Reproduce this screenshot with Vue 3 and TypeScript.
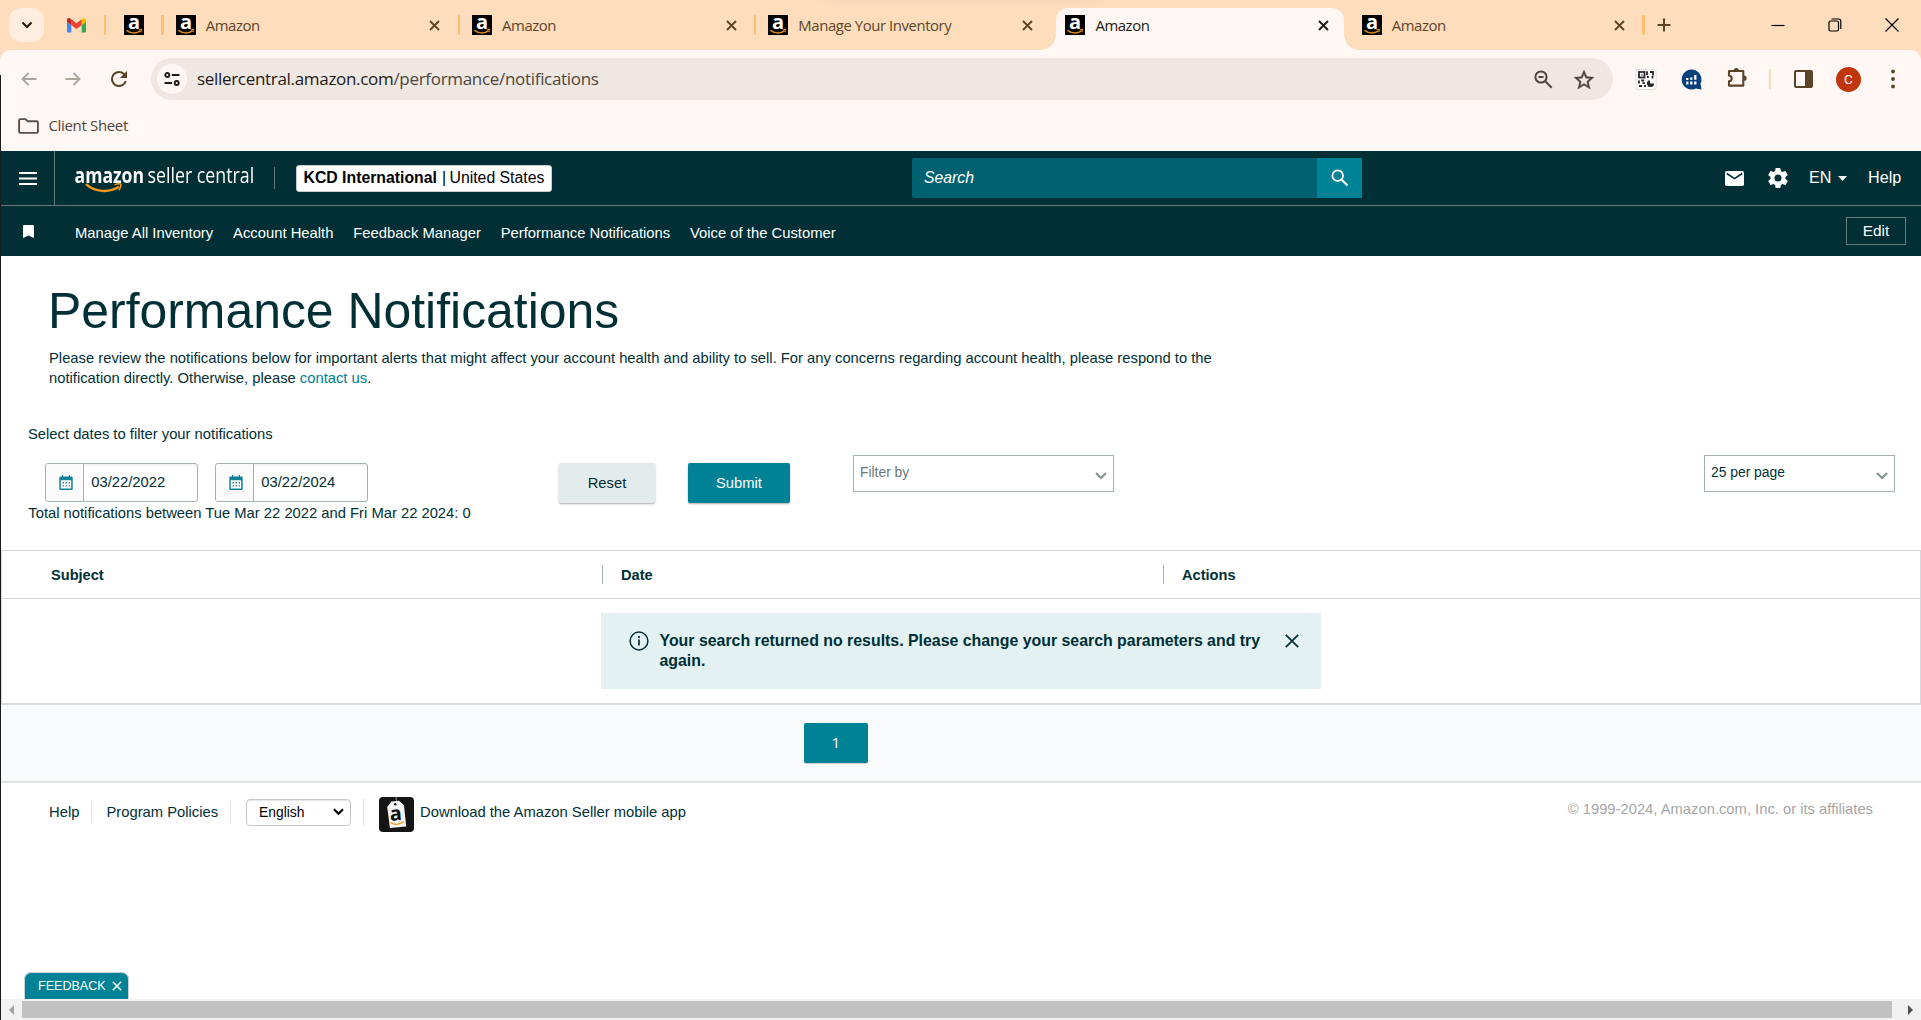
<script setup lang="ts">
interface Tab {
  title: string
  active?: boolean
}

const tabs: Tab[] = [
  { title: 'Amazon' },
  { title: 'Amazon' },
  { title: 'Manage Your Inventory' },
  { title: 'Amazon', active: true },
  { title: 'Amazon' },
]

const favorites: string[] = [
  'Manage All Inventory',
  'Account Health',
  'Feedback Manager',
  'Performance Notifications',
  'Voice of the Customer',
]

const dates: string[] = ['03/22/2022', '03/22/2024']
</script>

<template>
  <div class="window">
    <header class="chrome">
      <div class="tabstrip">
        <div class="tab-search">
          <svg width="12" height="8" viewBox="0 0 12 8"><path d="M1.5 1.5 6 6l4.500-4.500" fill="none" stroke="#231a10" stroke-width="2.200" /></svg>
        </div>
        <svg class="gmail" width="19" height="14.500" viewBox="52 42 88 66" preserveAspectRatio="none">
          <path fill="#4285f4" d="M58 108h14V74L52 59v43c0 3.320 2.690 6 6 6" />
          <path fill="#34a853" d="M120 108h14c3.320 0 6-2.690 6-6V59l-20 15" />
          <path fill="#fbbc04" d="M120 48v26l20-15v-8c0-7.420-8.470-11.650-14.400-7.200" />
          <path fill="#ea4335" d="M72 74V48l24 18 24-18v26L96 92" />
          <path fill="#c5221f" d="M52 51v8l20 15V48l-5.600-4.200c-5.940-4.450-14.400-.22-14.400 7.200" />
        </svg>
        <i class="sep pinned-sep"></i>
        <svg class="favicon pinned" viewBox="0 0 20 20">
          <rect width="20" height="20" fill="#000" />
          <text x="10" y="13.800" text-anchor="middle" class="fav-letter">a</text>
          <path d="M2.500 15.300c4.500 3.300 10 3.300 14 .6" fill="none" stroke="#d98a1c" stroke-width="1.500" />
          <path d="M14.600 14.800l3-.3-.8 2.800" fill="none" stroke="#d98a1c" stroke-width="1.100" />
        </svg>
        <div v-for="(tab, i) in tabs" :key="i" class="tab" :class="{ active: tab.active }">
          <i v-if="!tab.active && i !== 4" class="sep"></i>
          <svg class="favicon" viewBox="0 0 20 20">
            <rect width="20" height="20" fill="#000" />
            <text x="10" y="13.800" text-anchor="middle" class="fav-letter">a</text>
            <path d="M2.500 15.300c4.500 3.300 10 3.300 14 .6" fill="none" stroke="#d98a1c" stroke-width="1.500" />
            <path d="M14.600 14.800l3-.3-.8 2.800" fill="none" stroke="#d98a1c" stroke-width="1.100" />
          </svg>
          <span class="tab-title">{{ tab.title }}</span>
          <svg class="tab-close" width="11" height="11" viewBox="0 0 11 11"><path d="M1 1l9 9M10 1l-9 9" fill="none" stroke="currentColor" stroke-width="1.900" /></svg>
        </div>
        <i class="sep last-sep"></i>
        <svg class="new-tab" width="14" height="14" viewBox="0 0 14 14"><path d="M7 .5v13M.5 7h13" stroke="#59442a" stroke-width="2" /></svg>
        <div class="win-controls">
          <svg width="14" height="14" viewBox="0 0 14 14"><path d="M.5 7.500h13" stroke="#000" stroke-width="1.200" /></svg>
          <svg width="14" height="14" viewBox="0 0 14 14"><g fill="none" stroke="#000" stroke-width="1.200"><rect x="1" y="3" width="9.500" height="10" rx="1.500" /><path d="M3.500 1h7a2.300 2.300 0 0 1 2.300 2.300V11" /></g></svg>
          <svg width="14" height="14" viewBox="0 0 14 14"><path d="M.5.5l13 13M13.500.5l-13 13" stroke="#000" stroke-width="1.200" /></svg>
        </div>
      </div>

      <div class="toolbar">
        <svg class="nav-arrow back" width="16" height="14" viewBox="0 0 16 14"><path d="M15.500 7H1.500M7.500.9 1.500 7l6 6.100" fill="none" stroke="#aea39b" stroke-width="1.900" /></svg>
        <svg class="nav-arrow forward" width="16" height="14" viewBox="0 0 16 14"><path d="M.5 7h14M8.500.9l6 6.100-6 6.100" fill="none" stroke="#aea39b" stroke-width="1.900" /></svg>
        <svg class="reload" width="16" height="16" viewBox="4 4 16 16"><path fill="#5a4327" d="M17.650 6.350A7.960 7.960 0 0 0 12 4a8 8 0 1 0 7.730 10h-2.080A6 6 0 1 1 12 6c1.660 0 3.140.69 4.220 1.780L13 11h7V4z" /></svg>
        <div class="omnibox">
          <div class="site-info">
            <svg width="16" height="14" viewBox="0 0 16 14"><g fill="none" stroke="#231a14" stroke-width="1.900"><circle cx="3.300" cy="3" r="2" /><path d="M7.800 3H15.500M.5 11H8" /><circle cx="12.700" cy="11" r="2" /></g></svg>
          </div>
          <span class="url"><span class="host">sellercentral.amazon.com</span>/performance/notifications</span>
          <svg class="zoom-out" width="19" height="19" viewBox="0 0 19 19"><g fill="none" stroke="#50453d" stroke-width="2"><circle cx="7" cy="7" r="5.600" /><path d="M11 11l6.700 6.700M4.500 7h5" /></g></svg>
          <svg class="star" width="20" height="19" viewBox="2 2 20 19"><path fill="#50453d" stroke="#50453d" stroke-width=".4" d="M22 9.240l-7.190-.62L12 2 9.190 8.630 2 9.240l5.460 4.730L5.820 21 12 17.270 18.180 21l-1.630-7.030L22 9.240zM12 15.400l-3.760 2.270 1-4.280-3.320-2.880 4.380-.38L12 6.100l1.710 4.040 4.380.38-3.320 2.880 1 4.280L12 15.400z" /></svg>
        </div>
        <svg class="ext-qr" width="22" height="22" viewBox="0 0 22 22">
          <rect x="1" y="1.500" width="20" height="20" rx="2" fill="#fff" stroke="#e4dedb" />
          <g fill="none" stroke="#26282a" stroke-width="1.800"><rect x="4" y="4" width="5.500" height="5.500" /><path d="M12 3.200v4M12 9h1.800M15 4h3v3.500M17.500 8v2.500M4 12.500v3M6.200 12.500h3M4 18h3M7.500 15.200h2.500M9 18h2" /></g>
          <path fill="#26282a" d="M6.200 6.200h1.400v1.400H6.200zM14.500 12a3.600 3.600 0 1 0 4.700 3.500h-3.800z" />
        </svg>
        <svg class="ext-chat" width="21" height="21" viewBox="0 0 21 21">
          <path fill="#063f7b" d="M10.500.5a10 10 0 1 0 4.300 19.100l5.700.9-1-5.700A10 10 0 0 0 10.500.5z" />
          <path d="M6.300 9v2M10.300 8.500v2.300M14.300 6v4.800M6.300 12.500v3M10.300 12.500v3M14.300 12.500v3" stroke="#fff" stroke-width="2.300" />
        </svg>
        <svg class="puzzle" width="22" height="21" viewBox="0 0 22 21">
          <path d="M2 4h14.300v14.600H2v-4.300c3.600-.6 3.600-5.200 0-5.800z" fill="none" stroke="#5a4327" stroke-width="2.100" stroke-linejoin="round" />
          <path fill="#5a4327" d="M6.700 3.500a2.600 2.600 0 0 1 5.200 0zM17 8.600a2.600 2.600 0 0 1 0 5.200z" />
        </svg>
        <i class="tool-sep"></i>
        <svg class="side-panel" width="19" height="18" viewBox="0 0 19 18"><rect x="1" y="1" width="17" height="16" rx="1" fill="none" stroke="#5a4327" stroke-width="2" /><path fill="#5a4327" d="M11 1h7v16h-7z" /></svg>
        <div class="avatar">C</div>
        <svg class="dots" width="4" height="20" viewBox="0 0 4 20"><g fill="#5a4327"><circle cx="2" cy="2.500" r="1.900" /><circle cx="2" cy="10" r="1.900" /><circle cx="2" cy="17.500" r="1.900" /></g></svg>
      </div>

      <div class="bookmarks">
        <svg width="21" height="16" viewBox="0 0 21 16"><path d="M1.100 2.200q0-1.100 1.100-1.100h5.300l2.200 2.200h9.100q1.100 0 1.100 1.100v9.400q0 1.100-1.100 1.100H2.200q-1.100 0-1.100-1.100z" fill="none" stroke="#5b5048" stroke-width="1.900" /></svg>
        <span>Client Sheet</span>
      </div>
    </header>

    <div class="sc-header">
      <div class="burger"><svg width="18" height="13" viewBox="0 0 18 13"><path d="M0 1h18M0 6.500h18M0 12h18" stroke="#fff" stroke-width="1.800" /></svg></div>
      <div class="logo">
        <b>amazon</b><span>seller central</span>
        <svg width="38" height="10" viewBox="0 0 38 10"><path d="M1 1.200c9 8.200 23 8.800 33 2.600" fill="none" stroke="#f7981d" stroke-width="2.400" /><path d="M29.500 1.600c3-1 5-1.200 6.300-.6.400 1.800-.5 4.200-2 6.200" fill="none" stroke="#f7981d" stroke-width="1.500" /></svg>
      </div>
      <i class="head-sep"></i>
      <div class="account"><b>KCD International</b><em>|</em><span>United States</span></div>
      <div class="search">
        <span>Search</span>
        <div class="search-btn"><svg width="18" height="18" viewBox="0 0 18 18"><g fill="none" stroke="#fff" stroke-width="1.800"><circle cx="6.700" cy="6.700" r="5.300" /><path d="M10.700 10.700l5.800 5.800" stroke-width="2.100" /></g></svg></div>
      </div>
      <svg class="mail" width="19" height="15" viewBox="0 0 19 15"><rect width="19" height="15" rx="1.800" fill="#fff" /><path d="M1.800 2.500l7.700 5.100 7.700-5.100" fill="none" stroke="#002f36" stroke-width="1.700" /></svg>
      <svg class="gear" width="20" height="20" viewBox="2 2 20 20"><path fill="#fff" d="M19.430 12.980c.04-.32.070-.64.070-.98s-.03-.66-.07-.98l2.110-1.650c.19-.15.240-.42.120-.64l-2-3.460c-.12-.22-.39-.3-.61-.22l-2.490 1c-.52-.4-1.080-.73-1.690-.98l-.38-2.650A.488.488 0 0 0 14 2h-4c-.25 0-.46.180-.49.420l-.38 2.650c-.61.250-1.170.590-1.690.980l-2.490-1c-.23-.09-.49 0-.61.220l-2 3.460c-.13.220-.07.490.12.640l2.110 1.650c-.04.320-.07.650-.07.980s.03.660.070.980l-2.110 1.650c-.19.150-.24.420-.12.640l2 3.460c.12.220.39.300.61.220l2.490-1c.52.400 1.080.730 1.690.980l.38 2.650c.03.240.24.420.49.420h4c.25 0 .46-.18.490-.42l.38-2.650c.61-.25 1.170-.59 1.690-.98l2.490 1c.23.090.49 0 .61-.22l2-3.460c.12-.22.070-.49-.12-.64l-2.110-1.650zM12 15.500a3.500 3.500 0 1 1 0-7 3.500 3.500 0 0 1 0 7z" /></svg>
      <div class="lang"><span>EN</span><svg width="9" height="5" viewBox="0 0 9 5"><path d="M0 0h9L4.500 5z" fill="#fff" /></svg></div>
      <span class="help">Help</span>
    </div>

    <nav class="fav-bar">
      <svg class="bookmark" width="11" height="13" viewBox="0 0 11 13"><path d="M0 1q0-1 1-1h9q1 0 1 1v12L5.500 10.600 0 13z" fill="#fff" /></svg>
      <div class="fav-links"><a v-for="f in favorites" :key="f">{{ f }}</a></div>
      <div class="edit">Edit</div>
    </nav>

    <main class="content">
      <h1>Performance Notifications</h1>
      <p class="intro">Please review the notifications below for important alerts that might affect your account health and ability to sell. For any concerns regarding account health, please respond to the<br />notification directly. Otherwise, please <a>contact us</a>.</p>
      <p class="hint">Select dates to filter your notifications</p>
      <div class="filters">
        <div v-for="d in dates" :key="d" class="date">
          <div class="cal">
            <svg width="14" height="15" viewBox="0 0 14 15"><path fill="#12809a" d="M3 0v1.500H1.500A1.200 1.200 0 0 0 .3 2.700v11.100A1.200 1.200 0 0 0 1.500 15h11a1.200 1.200 0 0 0 1.200-1.200V2.700a1.200 1.200 0 0 0-1.200-1.200H11V0H9.800v1.500H4.200V0z" /><path fill="#fff" d="M1.800 5.300h10.400v8.200H1.800z" /><path d="M3.500 7.700h7.500M3.500 10.900h7.500" stroke="#3a82a3" stroke-width="1.400" stroke-dasharray="1.500 1.500" /></svg>
          </div>
          <span>{{ d }}</span>
        </div>
        <div class="btn reset">Reset</div>
        <div class="btn submit">Submit</div>
        <div class="select filter-by"><span>Filter by</span><svg width="12" height="8" viewBox="0 0 12 8"><path d="M1 1l5 5 5-5" fill="none" stroke="#879596" stroke-width="2.200" /></svg></div>
        <div class="select per-page"><span>25 per page</span><svg width="12" height="8" viewBox="0 0 12 8"><path d="M1 1l5 5 5-5" fill="none" stroke="#879596" stroke-width="2.200" /></svg></div>
      </div>
      <p class="total">Total notifications between Tue Mar 22 2022 and Fri Mar 22 2024: 0</p>

      <section class="table">
        <div class="thead"><div class="th first">Subject</div><div class="th">Date</div><div class="th">Actions</div></div>
        <div class="tbody">
          <div class="alert">
            <svg class="info" width="20" height="20" viewBox="0 0 20 20"><circle cx="10" cy="10" r="8.900" fill="none" stroke="#002f36" stroke-width="1.500" /><path d="M10 8.500v6M10 5v1.900" stroke="#002f36" stroke-width="1.700" /></svg>
            <p>Your search returned no results. Please change your search parameters and try<br />again.</p>
            <svg class="dismiss" width="14" height="14" viewBox="0 0 14 14"><path d="M.8.800l12.400 12.400M13.200.8L.8 13.200" stroke="#002f36" stroke-width="1.700" /></svg>
          </div>
        </div>
      </section>
      <div class="pager"><div class="page">1</div></div>
    </main>

    <footer class="footer">
      <span class="f-help">Help</span><i></i>
      <span class="f-policies">Program Policies</span><i></i>
      <div class="f-lang"><span>English</span><svg width="11" height="8" viewBox="0 0 11 8"><path d="M1 1.300l4.500 4.500L10 1.300" fill="none" stroke="#000" stroke-width="2.100" /></svg></div><i class="tall"></i>
      <svg class="app-icon" width="35" height="35" viewBox="0 0 35 35">
        <rect width="35" height="35" rx="4" fill="#151515" />
        <path d="M17 0l.5 6" stroke="#888" stroke-width="1" />
        <path fill="#f4f4f4" d="M12.500 4.600l7.500-.8 5 4.500 2.200 21.300-16.300 1.400L8.200 10z" />
        <circle cx="16.200" cy="7.300" r="1.200" fill="#151515" />
        <text x="17" y="23.500" text-anchor="middle" class="app-letter" transform="rotate(-5 17 20)">a</text>
        <path d="M11.500 25.500c4.500 3 9 2.300 13.300-1" fill="none" stroke="#f79b22" stroke-width="1.500" />
      </svg>
      <span class="f-app">Download the Amazon Seller mobile app</span>
      <span class="copyright">© 1999-2024, Amazon.com, Inc. or its affiliates</span>
    </footer>

    <div class="feedback"><span>FEEDBACK</span><svg width="10" height="10" viewBox="0 0 10 10"><path d="M.8.800l8.400 8.400M9.200.8L.8 9.200" stroke="#fff" stroke-width="1.400" /></svg></div>

    <div class="scrollbar">
      <svg width="5" height="10" viewBox="0 0 5 10"><path d="M5 0v10L0 5z" fill="#a3a3a3" /></svg>
      <div class="thumb"></div>
      <svg class="right" width="5" height="10" viewBox="0 0 5 10"><path d="M0 0v10l5-5z" fill="#505050" /></svg>
    </div>
  </div>
</template>

<style>
html, body { margin: 0; overflow: hidden; background: #fff; }
</style>

<style scoped>
* { box-sizing: border-box; }
svg { display: block; flex: none; overflow: visible; }
p, h1 { margin: 0; }
.window { position: relative; width: 1921px; height: 1020px; display: flex; flex-direction: column; overflow: hidden; background: #fff; color: #002f36; font: 14.780px/20px "Liberation Sans", Arial, sans-serif; white-space: nowrap; }
.window::after { content: ""; position: absolute; left: 0; top: 75px; bottom: 0; width: 1px; background: #1c1c1c; }

/* browser chrome */
.chrome { height: 151px; background: #feddbc; font-family: "Open Sans", "Noto Sans", sans-serif; flex: none; }
.tabstrip { position: relative; height: 50px; display: flex; align-items: center; padding: 0 22px 9px 9px; }
.tabstrip::before { content: ""; position: absolute; left: 815px; top: 0; width: 295px; height: 6px; background: linear-gradient(#f3d3b4, #feddbc00); mask-image: linear-gradient(90deg, transparent, #000 15%, #000 85%, transparent); }
.tab-search { width: 35px; height: 34px; margin-top: 9px; border-radius: 12px; background: #ffeedf; display: flex; align-items: center; justify-content: center; flex: none; }
.gmail { margin: 9px 0 0 22.500px; }
.sep { width: 2.500px; height: 20px; border-radius: 1px; background: #ffbe70; flex: none; margin-top: 9px; }
.pinned-sep { margin-left: 18px; }
.favicon { width: 20px; height: 20px; flex: none; }
.pinned { margin: 9px 19px 0 17.500px; }
.fav-letter { font: bold 20px "Open Sans", sans-serif; fill: #fff; }
.tab { position: relative; width: 296.300px; height: 42px; margin-top: 8px; align-self: flex-start; display: flex; align-items: center; flex: none; padding: 0 0 8px 14px; color: #5d4528; }
.tab .sep { margin: 0 12px 0 -15.250px; }
.tab > * { position: relative; }
.tab-title { flex: 1; margin-left: 10px; font-size: 14.900px; letter-spacing: -.42px; }
.tab-close { margin-right: 18.500px; }
.tab.active { color: #231a10; }
.tab.active::before { content: ""; position: absolute; left: 4.500px; right: 4px; top: 0; bottom: 0; background: #fff7f4; border-radius: 12px 12px 0 0; }
.tab.active::after { content: ""; position: absolute; left: -10.500px; right: -11px; bottom: 0; height: 15px; background: radial-gradient(circle at 0 0, transparent 14.500px, #fff7f4 15px) left / 15px 15px no-repeat, radial-gradient(circle at 100% 0, transparent 14.500px, #fff7f4 15px) right / 15px 15px no-repeat; }
.last-sep { margin-left: -1.500px; }
.new-tab { margin: 9px 0 0 12px; }
.win-controls { margin: 8px 0 0 auto; display: flex; gap: 43px; }
.toolbar { height: 58px; background: #fff7f4; border-radius: 10px 10px 0 0; display: flex; align-items: center; padding: 0 26px 0 21px; }
.forward { margin-left: 28px; }
.reload { margin: 0 24px 0 30px; }
.omnibox { width: 1462px; height: 42px; border-radius: 21px; background: #efe7e2; display: flex; align-items: center; padding: 0 19px 0 6px; }
.site-info { width: 30px; height: 30px; border-radius: 50%; background: #fff7f4; display: flex; align-items: center; justify-content: center; }
.url { flex: 1; margin-left: 10px; font-size: 17px; letter-spacing: -.31px; color: #50453d; }
.host { color: #1f1a17; }
.star { margin-left: 21px; }
.ext-qr { margin-left: 22px; }
.ext-chat { margin-left: 24px; }
.puzzle { margin-left: 25px; margin-top: -3px; }
.tool-sep { width: 2px; height: 20px; background: #fedcba; margin-left: 20px; }
.side-panel { margin-left: 23px; }
.avatar { width: 25px; height: 25px; border-radius: 50%; background: #c1350d; color: #fff; font: 13.500px/25px Roboto, sans-serif; text-align: center; margin-left: 23px; }
.dots { margin-left: auto; }
.bookmarks { height: 43px; background: #fff7f4; display: flex; align-items: center; padding: 0 0 8px 18px; font-size: 15px; letter-spacing: -.34px; color: #50453d; }
.bookmarks span { margin: -2px 0 0 9.500px; }

/* seller central header */
.sc-header { height: 55px; flex: none; background: #002f36; border-bottom: 1px solid #66797b; color: #fff; display: flex; align-items: center; font-size: 15.800px; }
.burger { width: 55px; height: 54px; border-right: 1px solid #66797b; display: flex; align-items: center; padding-left: 19px; }
.logo { position: relative; width: 219px; padding-left: 19.500px; font: 17.800px/24px "Open Sans", sans-serif; display: flex; margin-top: -5px; }
.logo b, .logo span { transform: scaleY(1.18); transform-origin: 0 17px; }
.logo b { font-size: 17.600px; width: 73px; }
.logo svg { position: absolute; left: 30px; top: 19px; }
.head-sep { width: 1px; height: 22px; background: #66797b; margin-right: 21px; }
.account { width: 256px; height: 27px; border: 1px solid #c5cdce; border-radius: 3px; background: #fff; color: #000; padding-left: 6.500px; line-height: 24px; display: flex; margin-top: 1px; }
.account em { font-style: normal; margin: 0 3.500px 0 5px; }
.search { width: 450px; height: 40px; margin-left: 360px; background: #006170; border-radius: 2px; display: flex; align-items: center; justify-content: space-between; padding-left: 12px; font-style: italic; }
.search-btn { width: 45px; height: 40px; background: #008296; display: flex; align-items: center; padding-left: 14px; }
.mail { margin-left: 363px; }
.gear { margin-left: 23.500px; }
.lang { display: flex; align-items: center; gap: 6px; margin: -2px 0 0 21.500px; font-size: 16.200px; }
.lang svg { margin-top: 3px; }
.help { margin: -2px 0 0 21.500px; font-size: 16.200px; }
.fav-bar { height: 50px; flex: none; background: #002f36; color: #fff; display: flex; align-items: center; padding-left: 23px; }
.fav-links { display: flex; gap: 19.900px; flex: 1; margin: 4px 0 0 41px; font-size: 14.810px; }
.edit { width: 60px; height: 28px; border: 1px solid #66797b; line-height: 26px; text-align: center; margin-right: 15px; font-size: 15.400px; }

/* page body */
.content { display: flex; flex-direction: column; }
h1 { font-weight: 400; font-size: 49.900px; line-height: 60px; margin: 25px 0 0 48px; }
.intro { margin: 7px 0 0 49px; }
.intro a { color: #008296; }
.hint { margin: 36px 0 0 28px; }
.filters { height: 48px; margin-top: 11px; display: flex; padding: 0 26px 0 45px; }
.date { width: 153px; height: 39px; margin: 8px 17px 0 0; border: 1px solid #a2b1b2; border-radius: 3px; display: flex; line-height: 37px; box-shadow: inset 0 2px 2px #0000000d; overflow: hidden; }
.cal { width: 38px; background: #fafafa; border-right: 1px solid #a2b1b2; display: flex; align-items: center; justify-content: center; }
.cal svg { margin-left: 3px; }
.date span { margin-left: 7.300px; }
.btn { height: 40px; margin-top: 8px; line-height: 40px; text-align: center; border-radius: 2px; box-shadow: 0 1px 2px #00000055; }
.reset { width: 96px; margin-left: 174px; background: #e3ebec; }
.submit { width: 102px; margin-left: 33px; background: #008296; color: #fff; }
.select { height: 37px; border: 1px solid #a2b1b2; font-size: 13.850px; display: flex; justify-content: space-between; padding: 0 6px; line-height: 33px; }
.select svg { margin-top: 16px; }
.filter-by { width: 261px; margin-left: 63px; color: #6b7778; }
.per-page { width: 191px; margin-left: auto; }
.total { margin: 0 0 27px 28.300px; }
.table { border: 1px solid #d5dbdb; border-bottom: 2px solid #d5dbdf; margin-left: 1px; height: 155px; }
.thead { height: 48px; border-bottom: 1px solid #d5dbdb; display: flex; align-items: center; font-weight: bold; font-size: 14.600px; }
.th { width: 561px; padding: 2px 0 0 18px; border-left: 1px solid #a2b1b2; height: 19px; line-height: 17px; }
.th.first { width: 600px; padding-left: 49px; border-left: 0; }
.alert { width: 720px; height: 76px; margin: 14px 0 0 599px; background: #e3f1f3; display: flex; padding: 18px 22px 0 28px; font-weight: bold; font-size: 15.880px; }
.alert p { flex: 1; margin-left: 10.500px; }
.dismiss { margin-top: 3px; }
.pager { height: 78px; background: #f9fafc; border-bottom: 2px solid #dfe2e6; padding: 18px 0 0 804px; }
.page { width: 64px; height: 40px; border-radius: 2px; background: #008296; color: #fff; text-align: center; font: 14.500px/40px "Open Sans", sans-serif; box-shadow: 0 1px 1px #00000030; }

/* footer */
.footer { height: 58px; display: flex; align-items: center; padding: 0 48px 0 49px; }
.footer i { width: 1px; height: 22px; background: #dfe2e4; }
.footer i.tall { height: 27px; }
.f-help { width: 42px; }
.f-policies { width: 123.500px; margin-left: 14.500px; }
.f-lang { width: 105px; height: 27px; margin: 0 11.500px 0 15px; border: 1px solid #c4c8c9; border-radius: 4px; display: flex; align-items: center; justify-content: space-between; padding: 0 6px 0 12px; font-size: 13.870px; color: #000; box-shadow: inset 0 1px 1px #0000001a; }
.app-icon { margin: 5px 6.500px 0 15px; }
.app-letter { font: bold 20px "Open Sans", sans-serif; fill: #111; }
.copyright { margin: -6px 0 0 auto; color: #a6a6a6; }
.feedback { position: absolute; left: 24px; bottom: 21px; width: 105px; height: 27px; border: 1px solid #c9d3d5; border-bottom: 0; border-radius: 7px 7px 0 0; background: #008296; color: #fff; display: flex; align-items: center; gap: 6px; padding-left: 13px; font-size: 12.560px; }
.scrollbar { margin-top: auto; height: 21px; background: #f1f1f1; display: flex; align-items: center; padding: 0 8px 0 9px; flex: none; }
.thumb { height: 17px; flex: 1; margin: 0 16px 0 8px; background: #c1c1c1; }
</style>
